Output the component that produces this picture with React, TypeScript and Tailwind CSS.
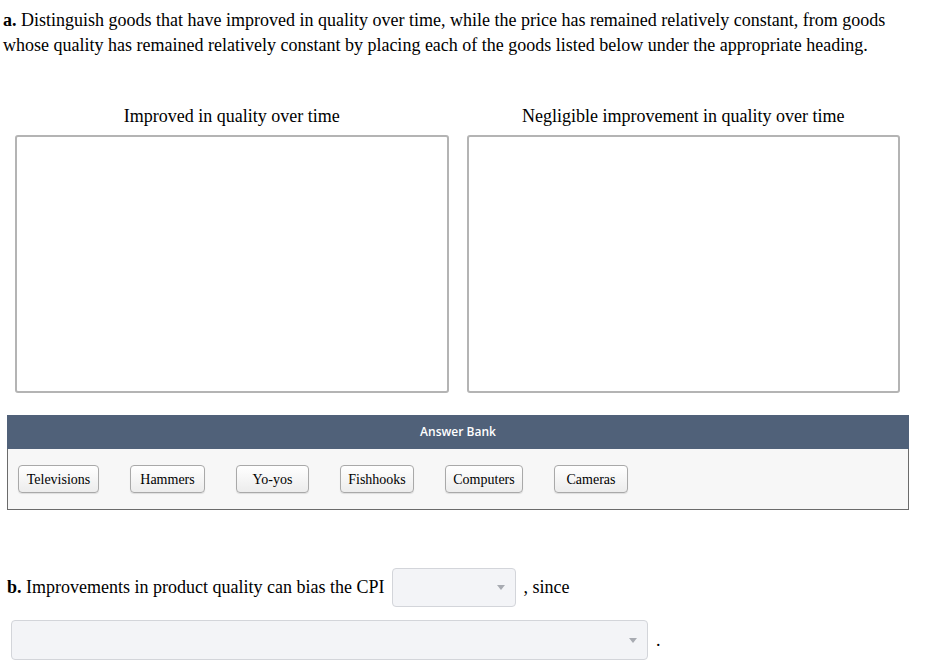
import React from "react";

// Answer bank tiles, widths measured from the layout
const goods: [string, string][] = [
  ["Televisions", "w-[81px]"],
  ["Hammers", "w-[75px]"],
  ["Yo-yos", "w-[73px]"],
  ["Fishhooks", "w-[74px]"],
  ["Computers", "w-[78px]"],
  ["Cameras", "w-[74px]"],
];

// Small grey caret used in the dropdowns
const Caret = () => (
  <svg width="8" height="5" viewBox="0 0 8 5" className="block">
    <path d="M0 0 L8 0 L4 5 Z" fill="#a8abb2" />
  </svg>
);

const Dropdown: React.FC<{ className: string }> = ({ className }) => (
  <div
    className={`flex items-center justify-end pr-[10px] bg-[#f3f4f7] border border-[#d3d5da] rounded-[4px] ${className}`}
  >
    <Caret />
  </div>
);

const App: React.FC = () => {
  return (
    <div className="w-[927px] min-h-[667px] bg-white text-black font-[family-name:'Liberation_Serif',serif]">
      {/* Part a */}
      <p className="pl-[3px] pr-[20px] pt-[8px] text-[18px] leading-[25px]">
        <b>a.</b> Distinguish goods that have improved in quality over time, while the price has remained relatively
        constant, from goods whose quality has remained relatively constant by placing each of the goods listed below
        under the appropriate heading.
      </p>

      <div className="ml-[15px] w-[885px] grid grid-cols-2 gap-x-[18px] mt-[49px]">
        {["Improved in quality over time", "Negligible improvement in quality over time"].map((h) => (
          <div key={h} className="flex flex-col">
            <div className="text-center text-[18px] leading-[18px] h-[28px]">{h}</div>
            <div className="h-[258px] border-2 border-[#b4b4b4] rounded-[3px] bg-white" />
          </div>
        ))}
      </div>

      {/* Answer bank */}
      <div className="ml-[7px] w-[902px] mt-[22px]">
        <div className="h-[34px] bg-[#506179] flex items-center justify-center text-white text-[12px] font-semibold font-[family-name:'Open_Sans',sans-serif]">
          Answer Bank
        </div>
        <div className="h-[61px] bg-[#f7f7f7] border border-t-0 border-[#6b6b6b] flex items-start gap-[31px] pl-[10px] pt-[16px]">
          {goods.map(([g, w]) => (
            <div
              key={g}
              className={`${w} h-[28px] flex items-center justify-center text-[14px] border border-[#a9a9a9] rounded-[4px] bg-gradient-to-b from-white to-[#ececec] shadow-[0_1px_1px_rgba(0,0,0,0.1)]`}
            >
              {g}
            </div>
          ))}
        </div>
      </div>

      {/* Part b */}
      <div className="ml-[7px] mt-[58px] flex items-center text-[18px]">
        <span>
          <b>b.</b> Improvements in product quality can bias the CPI
        </span>
        <Dropdown className="ml-[8px] w-[124px] h-[39px]" />
        <span className="ml-[7px]">, since</span>
      </div>
      <div className="ml-[11px] mt-[13px] flex items-center text-[18px]">
        <Dropdown className="w-[637px] h-[40px]" />
        <span className="ml-[8px]">.</span>
      </div>
    </div>
  );
};

export default App;
